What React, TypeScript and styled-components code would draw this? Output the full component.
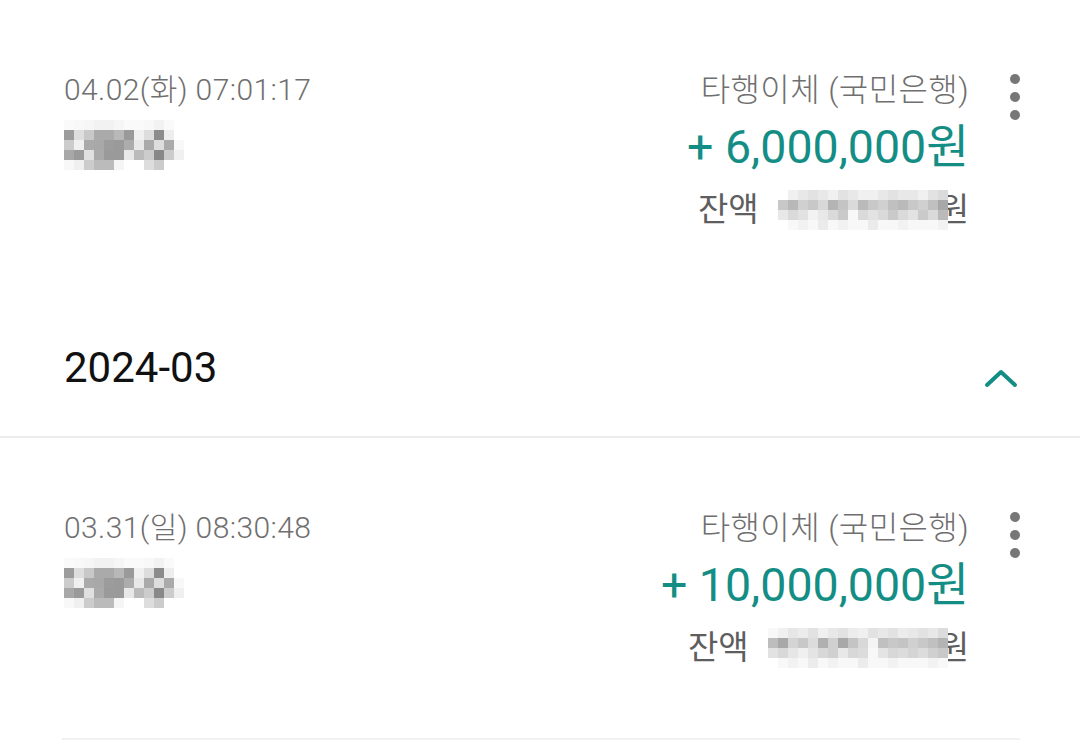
import { createGlobalStyle, styled } from "styled-components";

type Tx = {
  date: string;
  kind: string;
  amount: string;
  balanceCells: string[][];
};

const NAME_CELLS = [
  ["fafafa", "f8f8f8", "f6f6f6", "f2f2f2", "f2f2f2", "f6f6f6", "fafafa", "fafafa", "f8f8f8", "f2f2f2", "fafafa", "ffffff"],
  ["9c9c9c", "dedede", "c8c8c8", "aaaaaa", "aaaaaa", "b8b8b8", "9a9a9a", "f0f0f0", "dddddd", "8c8c8c", "eeeeee", "ffffff"],
  ["cccccc", "f0f0f0", "aaaaaa", "a8a8a8", "9c9c9c", "9a9a9a", "acacac", "e8e8e8", "aaaaaa", "dddddd", "aaaaaa", "f8f8f8"],
  ["a8a8a8", "9a9a9a", "e0e0e0", "aaaaaa", "9a9a9a", "9a9a9a", "e8e8e8", "bbbbbb", "cccccc", "888888", "cccccc", "f0f0f0"],
  ["f8f8f8", "f0f0f0", "cccccc", "bbbbbb", "bbbbbb", "f5f5f5", "ffffff", "ffffff", "dddddd", "cccccc", "ffffff", "ffffff"],
];

const BAL_A = [
  ["ffffff", "f0f0f0", "e8e8e8", "e2e2e2", "e8e8e8", "f0f0f0", "e2e2e2", "e8e8e8", "f0f0f0", "f0f0f0", "e8e8e8", "e2e2e2", "e8e8e8", "e8e8e8", "f0f0f0", "e2e2e2", "dadada"],
  ["c8c8c8", "b8b8b8", "d0d0d0", "c8c8c8", "d8d8d8", "b4b4b4", "c4c4c4", "dadada", "bababa", "c8c8c8", "d0d0d0", "c0c0c0", "bababa", "c8c8c8", "d0d0d0", "c0c0c0", "a8a8a8"],
  ["e8e8e8", "dadada", "e2e2e2", "f2f2f2", "e8e8e8", "dadada", "cacaca", "f8f8f8", "dadada", "e2e2e2", "dadada", "cacaca", "dadada", "e2e2e2", "cacaca", "dadada", "bababa"],
  ["ffffff", "f8f8f8", "f2f2f2", "f8f8f8", "ebebeb", "f8f8f8", "f2f2f2", "f8f8f8", "f8f8f8", "ebebeb", "f8f8f8", "f8f8f8", "f2f2f2", "f8f8f8", "f8f8f8", "f8f8f8", "f2f2f2"],
];

const BAL_B = [
  ["f8f8f8", "f0f0f0", "e6e6e6", "ececec", "e2e2e2", "f0f0f0", "e8e8e8", "e2e2e2", "ececec", "f0f0f0", "e2e2e2", "e8e8e8", "e2e2e2", "ececec", "e8e8e8", "e2e2e2", "e8e8e8", "dcdcdc"],
  ["bdbdbd", "a8a8a8", "d4d4d4", "c8c8c8", "dcdcdc", "b0b0b0", "d0d0d0", "a8a8a8", "c4c4c4", "d8d8d8", "f4f4f4", "c0c0c0", "c8c8c8", "c4c4c4", "d0d0d0", "c8c8c8", "c0c0c0", "b4b4b4"],
  ["e2e2e2", "d8d8d8", "e6e6e6", "f0f0f0", "e4e4e4", "d8d8d8", "d0d0d0", "e8e8e8", "d8d8d8", "dcdcdc", "f8f8f8", "e4e4e4", "d8d8d8", "dcdcdc", "d4d4d4", "dcdcdc", "d0d0d0", "c8c8c8"],
  ["ffffff", "f8f8f8", "f2f2f2", "f8f8f8", "ececec", "f8f8f8", "f2f2f2", "f8f8f8", "f8f8f8", "ececec", "f8f8f8", "f8f8f8", "f2f2f2", "f8f8f8", "f8f8f8", "f8f8f8", "f2f2f2", "f8f8f8"],
];

const GlobalStyle = createGlobalStyle`
  html, body {
    margin: 0;
    padding: 0;
    background: #ffffff;
  }
  body {
    font-family: Roboto, "Noto Sans CJK KR", sans-serif;
    -webkit-font-smoothing: antialiased;
  }
`;

const Page = styled.div`
  width: 1080px;
  height: 751px;
  overflow: hidden;
  background: #fff;
`;

const Item = styled.section<{ $divider?: boolean }>`
  display: flex;
  margin: 0 60px 0 62px;
  padding: 70px 0 0 2px;
  height: 230px;
  border-bottom: ${(p) => (p.$divider ? "2px solid #f1f1f1" : "none")};
`;

const Left = styled.div`
  flex: 1;
  display: flex;
  flex-direction: column;
`;

const Right = styled.div`
  display: flex;
  flex-direction: column;
  align-items: flex-end;
`;

const Meta = styled.div<{ $size?: number }>`
  font-size: ${(p) => p.$size ?? 30}px;
  font-weight: 300;
  line-height: 40px;
  color: #6f6f6f;
  white-space: nowrap;
  letter-spacing: 0.4px;
`;

const NameBlur = styled.div`
  margin-top: 10px;
  display: flex;
`;

const Amount = styled.div`
  font-size: 46.5px;
  line-height: 74px;
  color: #148e85;
  white-space: nowrap;
`;

const Balance = styled.div`
  display: flex;
  align-items: center;
  margin-top: 4px;
  font-size: 33px;
  line-height: 44px;
  color: #5e5e5e;
  white-space: nowrap;
`;

const BalanceLabel = styled.span`
  margin-right: 19px;
`;

const BalanceBlur = styled.span`
  position: relative;
  z-index: 1;
  margin-right: -9px;
`;

const Kebab = styled.button`
  width: 51px;
  display: flex;
  flex-direction: column;
  align-items: flex-end;
  gap: 8px;
  padding: 4px 0 0 0;
  border: none;
  background: none;
  align-self: flex-start;
`;

const Dot = styled.span`
  width: 10px;
  height: 10px;
  border-radius: 50%;
  background: #777777;
`;

const MonthHeader = styled.header`
  display: flex;
  justify-content: space-between;
  padding: 38px 62px 38px 64px;
  height: 60px;
  border-bottom: 2px solid #ececec;
`;

const MonthTitle = styled.h2`
  margin: 0;
  font-size: 42px;
  font-weight: 400;
  line-height: 60px;
  color: #111111;
`;

const Chevron = styled.span`
  margin-top: 30px;
  width: 34px;
  height: 22px;
  display: flex;
  justify-content: center;
`;

const Mosaic = ({ cells, size = 10 }: { cells: string[][]; size?: number }) => {
  const rows = cells.length;
  const cols = cells[0].length;
  return (
    <svg width={cols * size} height={rows * size} style={{ display: "block" }}>
      {cells.map((row, y) =>
        row.map((c, x) => (
          <rect key={x + "-" + y} x={x * size} y={y * size} width={size} height={size} fill={"#" + c} />
        ))
      )}
    </svg>
  );
};

const TxItem = ({ tx, divider }: { tx: Tx; divider?: boolean }) => {
  return (
    <Item $divider={divider}>
      <Left>
        <Meta>{tx.date}</Meta>
        <NameBlur>
          <Mosaic cells={NAME_CELLS} />
        </NameBlur>
      </Left>
      <Right>
        <Meta $size={32}>{tx.kind}</Meta>
        <Amount>{tx.amount}</Amount>
        <Balance>
          <BalanceLabel>잔액</BalanceLabel>
          <BalanceBlur>
            <Mosaic cells={tx.balanceCells} />
          </BalanceBlur>
          <span>원</span>
        </Balance>
      </Right>
      <Kebab aria-label="더보기">
        <Dot />
        <Dot />
        <Dot />
      </Kebab>
    </Item>
  );
};

const App = () => {
  const first: Tx = {
    date: "04.02(화) 07:01:17",
    kind: "타행이체 (국민은행)",
    amount: "+ 6,000,000원",
    balanceCells: BAL_A,
  };
  const second: Tx = {
    date: "03.31(일) 08:30:48",
    kind: "타행이체 (국민은행)",
    amount: "+ 10,000,000원",
    balanceCells: BAL_B,
  };
  return (
    <Page>
      <GlobalStyle />
      <TxItem tx={first} />
      <MonthHeader>
        <MonthTitle>2024-03</MonthTitle>
        <Chevron>
          <svg width="34" height="20" viewBox="0 0 34 20" fill="none">
            <path d="M3 17 L17 4 L31 17" stroke="#148e85" strokeWidth="4" strokeLinecap="round" strokeLinejoin="round" />
          </svg>
        </Chevron>
      </MonthHeader>
      <TxItem tx={second} divider />
    </Page>
  );
};

export default App;
